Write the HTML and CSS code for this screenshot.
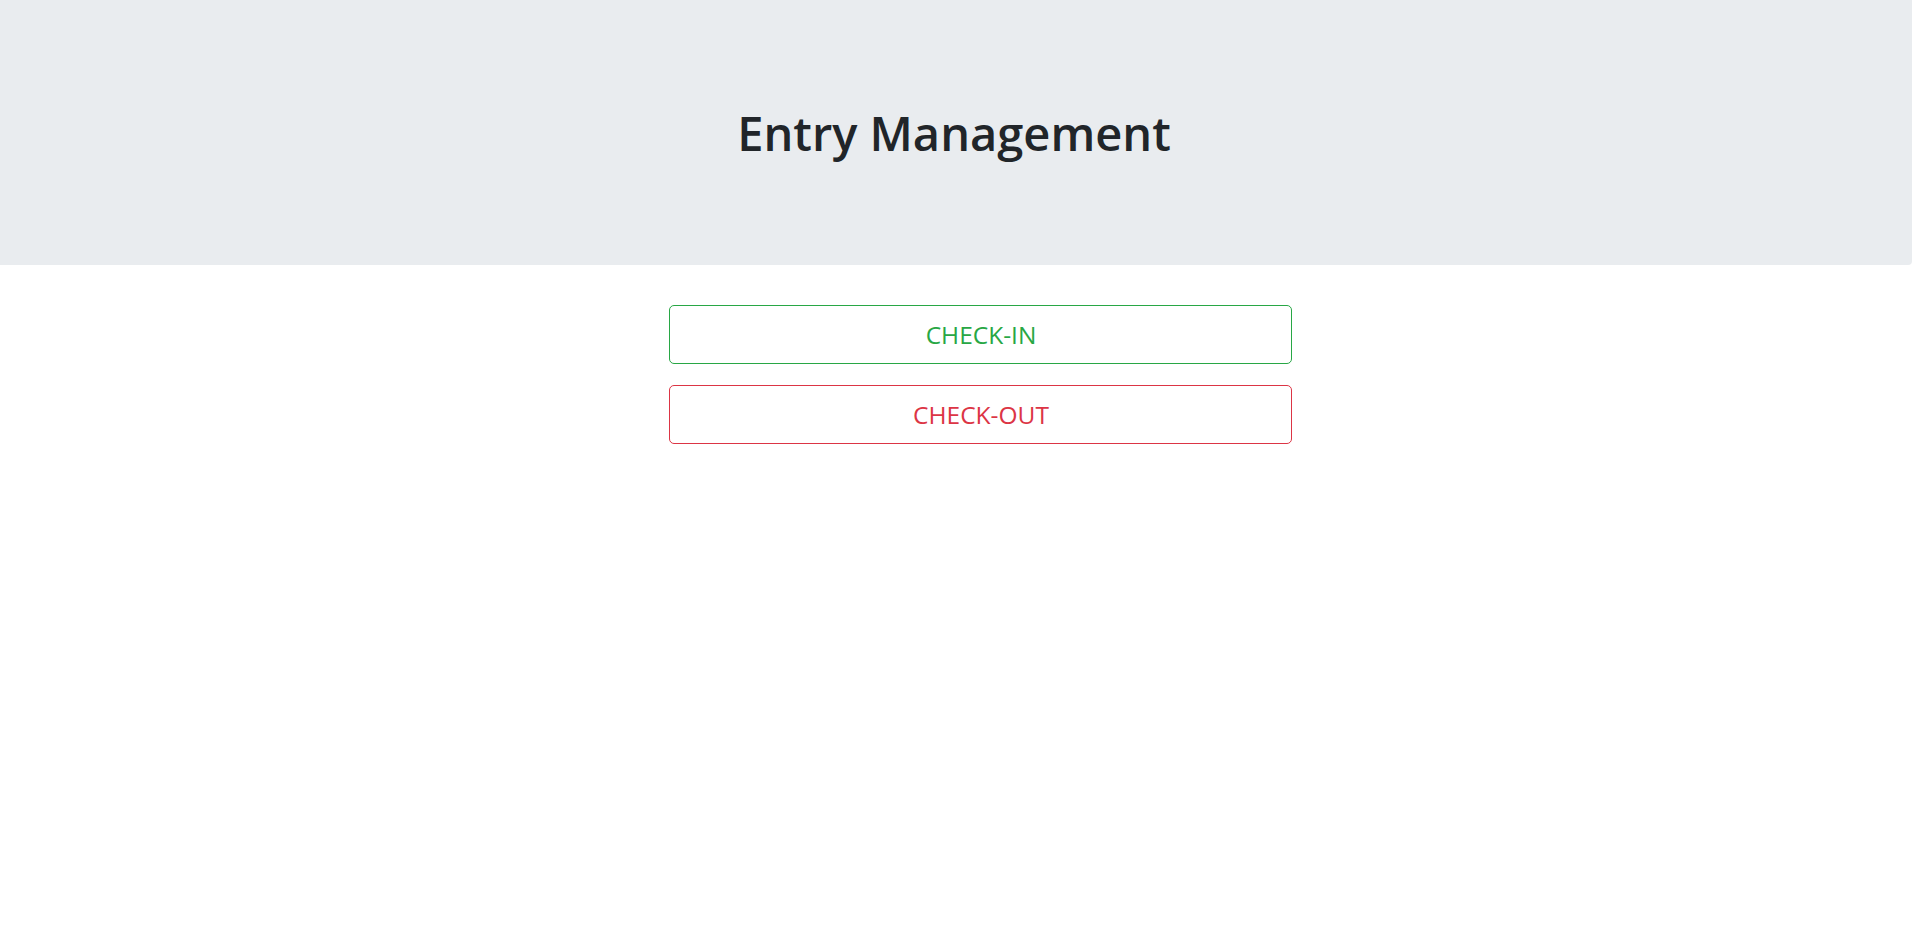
FILE: index.html
```html
<!DOCTYPE html>
<html lang="en">
<head>
<meta charset="utf-8">
<title>Entry Management</title>
<link rel="stylesheet" href="styles.css">
</head>
<body>
<header class="hero">
  <h1 class="hero-title">Entry Management</h1>
</header>
<main class="actions">
  <button class="btn btn-in" type="button">CHECK-IN</button>
  <button class="btn btn-out" type="button">CHECK-OUT</button>
</main>
</body>
</html>
```

FILE: styles.css
```css
html, body {
  margin: 0;
  padding: 0;
  background: #fff;
  font-family: "Open Sans", "Noto Sans", sans-serif;
  color: #212529;
}
.hero {
  background: #e9ecef;
  height: 265px;
  display: flex;
  align-items: center;
  justify-content: center;
  border-bottom-right-radius: 4px;
}
.hero-title {
  margin: 0;
  margin-top: 2px;
  margin-right: 4px;
  font-size: 47px;
  font-weight: 600;
  line-height: 1.2;
  color: #212529;
}
.actions {
  display: flex;
  flex-direction: column;
  gap: 21px;
  width: 623px;
  margin: 40px 0 0 669px;
}
.btn {
  display: block;
  box-sizing: border-box;
  width: 100%;
  height: 59px;
  background: #fff;
  border: 1px solid;
  border-radius: 5px;
  font-family: "Open Sans", "Noto Sans", sans-serif;
  font-size: 24.5px;
  line-height: 1.5;
  padding: 2px 0 0 1px;
  cursor: pointer;
}
.btn-in {
  color: #28a745;
  border-color: #28a745;
}
.btn-out {
  color: #dc3545;
  border-color: #dc3545;
}
```
